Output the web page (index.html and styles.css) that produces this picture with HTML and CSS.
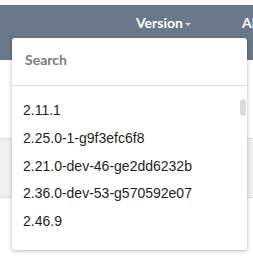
FILE: index.html
```html
<!DOCTYPE html>
<html lang="en">
<head>
  <meta charset="UTF-8">
  <title>Version picker</title>
  <link rel="stylesheet" href="styles.css">
</head>
<body>
  <header class="navbar">
    <nav class="nav">
      <a class="nav-item" href="#">Version<span class="caret"></span></a>
      <a class="nav-item" href="#">About</a>
    </nav>
  </header>

  <main class="content">
    <div class="row-alt"></div>
  </main>

  <div class="dropdown">
    <div class="dropdown-search">
      <input type="text" placeholder="Search">
    </div>
    <ul class="dropdown-list">
      <li>2.11.1</li>
      <li>2.25.0-1-g9f3efc6f8</li>
      <li>2.21.0-dev-46-ge2dd6232b</li>
      <li>2.36.0-dev-53-g570592e07</li>
      <li>2.46.9</li>
    </ul>
    <div class="scroll-thumb"></div>
  </div>
</body>
</html>
```

FILE: styles.css
```css
body {
  margin: 0;
  padding-top: 5px;
  background-color: #fff;
  font-family: 'Liberation Sans', Arial, sans-serif;
  overflow: hidden;
  height: 251px;
}
.navbar {
  height: 55px;
  background-color: #6a7889;
  overflow: hidden;
}
.nav {
  display: flex;
  gap: 51px;
  padding: 8px 0 0 136px;
  white-space: nowrap;
}
.nav-item {
  font-family: 'Lato', sans-serif;
  font-weight: bold;
  font-size: 14px;
  line-height: 20px;
  color: #fff;
  text-decoration: none;
  display: flex;
  align-items: center;
}
.caret {
  display: inline-block;
  width: 0;
  height: 0;
  margin: 2px 0 0 2px;
  border-left: 3px solid transparent;
  border-right: 3px solid transparent;
  border-top: 3px solid #d5dbe2;
}
.content {
  padding-top: 78px;
}
.row-alt {
  height: 58px;
  background-color: #f0f0f0;
  border-top: 1px solid #dcdcdc;
  border-bottom: 1px solid #dcdcdc;
}
.dropdown {
  position: absolute;
  top: 38px;
  left: 12px;
  width: 235px;
  height: 212px;
  background-color: #fff;
  border-radius: 3px;
  box-shadow: 0 1px 4px rgba(0,0,0,0.3);
  overflow: hidden;
}
.dropdown-search {
  height: 48px;
  border-bottom: 1px solid #dcdcdc;
  box-sizing: border-box;
  padding: 12px 13px;
}
.dropdown-search input {
  border: none;
  outline: none;
  padding: 0;
  width: 100%;
  font-family: 'Lato', sans-serif;
  font-size: 14px;
  line-height: 20px;
  height: 20px;
}
.dropdown-search input::placeholder {
  color: #7b7b7b;
  font-weight: bold;
}
.dropdown-list {
  list-style: none;
  margin: 0;
  padding: 11px 0 0 11px;
  height: 164px;
  overflow: hidden;
}
.dropdown-list li {
  font-size: 14px;
  line-height: 27.75px;
  color: #1e1e1e;
  white-space: nowrap;
}
.scroll-thumb {
  position: absolute;
  top: 61px;
  right: 1px;
  width: 6px;
  height: 17px;
  border-radius: 3px;
  background-color: #dadada;
}
```
